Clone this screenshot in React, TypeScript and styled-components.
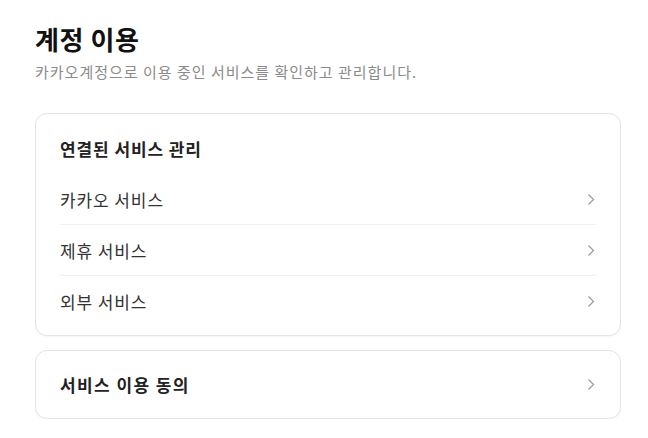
import React from "react";
import styled, { createGlobalStyle } from "styled-components";

const GlobalStyle = createGlobalStyle`
  html, body {
    margin: 0;
    padding: 0;
    background: #ffffff;
  }
  body {
    font-family: "Noto Sans CJK KR", "Noto Sans", sans-serif;
    color: #222;
  }
`;

const Page = styled.div`
  width: 586px;
  padding: 22px 0 0 35px;
`;

const Title = styled.h1`
  margin: 0;
  font-size: 26px;
  line-height: 34px;
  font-weight: 700;
  letter-spacing: 0.6px;
  color: #111;
`;

const Desc = styled.p`
  margin: 5px 0 0;
  font-size: 15px;
  line-height: 22px;
  letter-spacing: 1px;
  color: #8a8a8a;
`;

const Card = styled.section`
  margin-top: 30px;
  border: 1px solid #e4e4e4;
  border-radius: 12px;
  padding: 0 24px 9px;
  box-shadow: 0 1px 2px rgba(0, 0, 0, 0.04);

  & + & {
    margin-top: 14px;
    padding-bottom: 0;
  }
`;

const CardTitle = styled.h2`
  margin: 0;
  padding: 23px 0 13px;
  font-size: 17px;
  line-height: 24px;
  font-weight: 700;
  letter-spacing: 0.9px;
  color: #222;
`;

const Row = styled.a<{ $strong?: boolean; $tall?: boolean }>`
  display: flex;
  align-items: center;
  justify-content: space-between;
  height: ${(p) => (p.$tall ? "67px" : "50px")};
  font-size: 17px;
  letter-spacing: ${(p) => (p.$strong ? "1.4px" : "0.9px")};
  font-weight: ${(p) => (p.$strong ? 700 : 400)};
  color: ${(p) => (p.$strong ? "#222" : "#333")};
  text-decoration: none;
  cursor: pointer;

  & + & {
    border-top: 1px solid #f0f0f0;
  }
`;

const Chevron = () => (
  <svg width="8" height="13" viewBox="0 0 8 13" fill="none" style={{ marginRight: 1 }}>
    <path d="M1.5 1.5 6.5 6.5 1.5 11.5" stroke="#9a9a9a" strokeWidth="1.2" />
  </svg>
);

const linked = ["카카오 서비스", "제휴 서비스", "외부 서비스"];

const App = () => {
  return (
    <>
      <GlobalStyle />
      <Page>
        <Title>계정 이용</Title>
        <Desc>카카오계정으로 이용 중인 서비스를 확인하고 관리합니다.</Desc>
        <Card>
          <CardTitle>연결된 서비스 관리</CardTitle>
          {linked.map((name) => (
            <Row key={name}>
              {name}
              <Chevron />
            </Row>
          ))}
        </Card>
        <Card>
          <Row $strong $tall>
            서비스 이용 동의
            <Chevron />
          </Row>
        </Card>
      </Page>
    </>
  );
};

export default App;
